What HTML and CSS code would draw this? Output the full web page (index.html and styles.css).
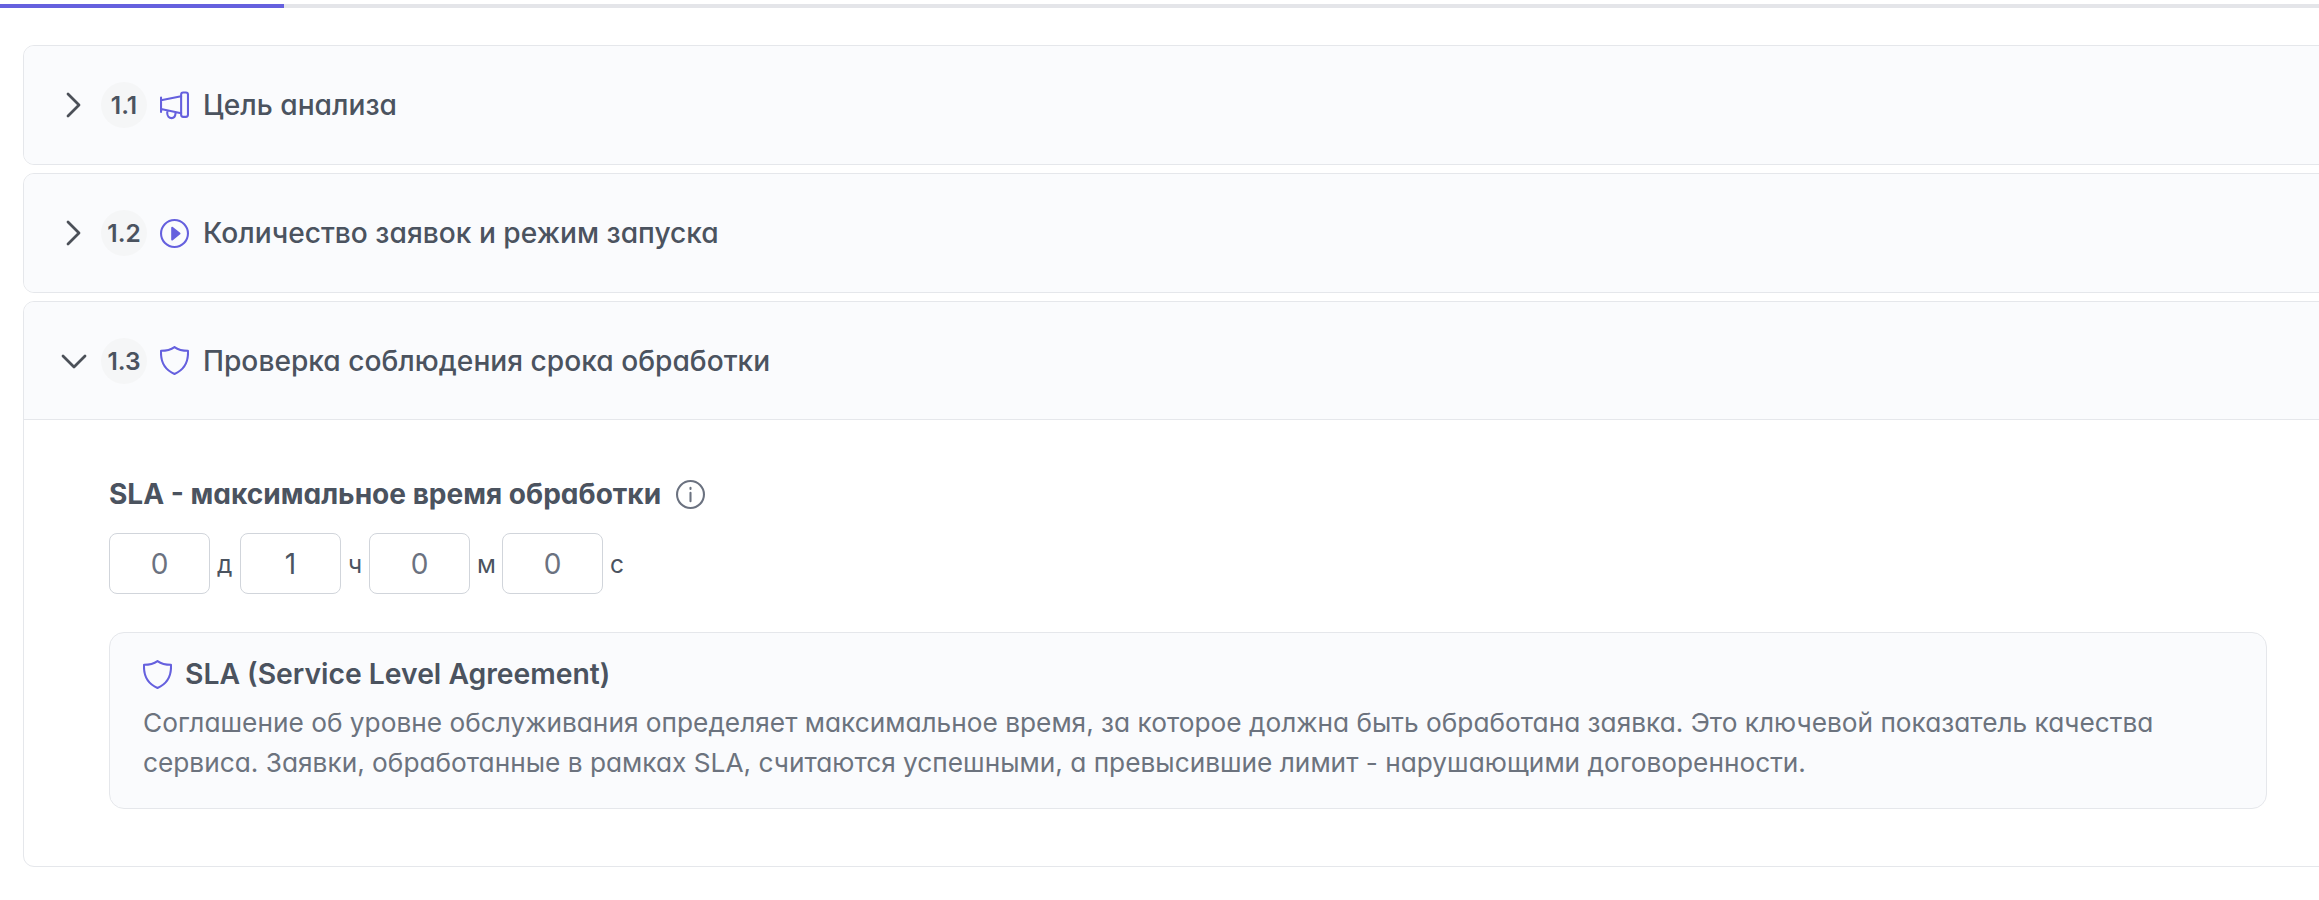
FILE: index.html
```html
<!DOCTYPE html>
<html lang="ru">
<head>
    <meta charset="UTF-8">
    <meta name="viewport" content="width=device-width, initial-scale=1.0">
    <title>Параметры анализа</title>
    <link rel="stylesheet" href="styles.css">
</head>
<body>
    <div class="progress">
        <div class="progress-bar"></div>
    </div>

    <div class="accordion">
        <section class="panel">
            <div class="panel-header">
                <svg class="chevron" viewBox="0 0 28 28"><path d="M8 3L19 14L8 25"/></svg>
                <span class="badge">1.1</span>
                <svg class="icon" viewBox="0 0 28 28">
                    <rect x="20.4" y="1.4" width="6.6" height="23.6" rx="2"/>
                    <path d="M1 6.2V20.2M1 9L20.4 5M1 17.4L20.4 21.4M7 19.8V21.6C7 24.2 8.8 26.2 11.2 26.2C13.2 26.2 14.8 24.6 15 21.4"/>
                </svg>
                <span class="panel-title">Цель анализа</span>
            </div>
        </section>

        <section class="panel">
            <div class="panel-header">
                <svg class="chevron" viewBox="0 0 28 28"><path d="M8 3L19 14L8 25"/></svg>
                <span class="badge">1.2</span>
                <svg class="icon" viewBox="0 0 28 28">
                    <circle cx="14" cy="14" r="13"/>
                    <path class="fill" d="M11.8 8.4L18.8 14L11.8 19.8Z"/>
                </svg>
                <span class="panel-title">Количество заявок и режим запуска</span>
            </div>
        </section>

        <section class="panel">
            <div class="panel-header open">
                <svg class="chevron" viewBox="0 0 28 28"><path d="M3 9L14 20L25 9"/></svg>
                <span class="badge">1.3</span>
                <svg class="icon" viewBox="0 0 28 28">
                    <path d="M14 1C10.6 3.4 6 4.6 1 4.6C.4 15.6 5.4 23.4 14 27C22.6 23.4 27.6 15.6 27 4.6C22 4.6 17.4 3.4 14 1Z"/>
                </svg>
                <span class="panel-title">Проверка соблюдения срока обработки</span>
            </div>
            <div class="panel-content">
                <div class="field-label">
                    <span>SLA - максимальное время обработки</span>
                    <svg class="icon info" viewBox="0 0 28 28">
                        <circle cx="14" cy="14" r="13"/>
                        <path d="M14 12.4V20.4M14 7.4V8.6"/>
                    </svg>
                </div>
                <div class="duration">
                    <input class="duration-input" type="text" placeholder="0">
                    <span class="unit unit-d">д</span>
                    <input class="duration-input" type="text" value="1">
                    <span class="unit unit-h">ч</span>
                    <input class="duration-input" type="text" placeholder="0">
                    <span class="unit unit-m">м</span>
                    <input class="duration-input" type="text" placeholder="0">
                    <span class="unit">с</span>
                </div>
                <div class="info-box">
                    <div class="info-title">
                        <svg class="icon" viewBox="0 0 28 28">
                            <path d="M14 1C10.6 3.4 6 4.6 1 4.6C.4 15.6 5.4 23.4 14 27C22.6 23.4 27.6 15.6 27 4.6C22 4.6 17.4 3.4 14 1Z"/>
                        </svg>
                        <span>SLA (Service Level Agreement)</span>
                    </div>
                    <p class="info-text">Соглашение об уровне обслуживания определяет максимальное время, за которое должна быть обработана заявка. Это ключевой показатель качества сервиса. Заявки, обработанные в рамках SLA, считаются успешными, а превысившие лимит - нарушающими договоренности.</p>
                </div>
            </div>
        </section>
    </div>
</body>
</html>
```
FILE: styles.css
```css
* {
    box-sizing: border-box;
}
body {
    margin: 0;
    padding-top: 4px;
    height: 900px;
    overflow: hidden;
    background: #fff;
    color: #4b535f;
    font-family: Inter, "Noto Sans", sans-serif;
    font-feature-settings: "cv02", "cv03", "cv04", "cv11";
    font-size: 28px;
}
.progress {
    height: 4px;
    background: #e4e5e9;
}
.progress-bar {
    width: 284px;
    height: 4px;
    background: #6560de;
}
.accordion {
    display: flex;
    flex-direction: column;
    gap: 8px;
    width: 2400px;
    margin: 37px 0 0 23px;
}
.panel {
    border: 1px solid #e5e7eb;
    border-radius: 11px;
    overflow: hidden;
}
.panel-header {
    display: flex;
    align-items: center;
    height: 118px;
    padding: 0 36px;
    background: #fafbfd;
    font-weight: 500;
}
.panel-header.open {
    border-bottom: 1px solid #e5e7eb;
}
.chevron {
    width: 28px;
    height: 28px;
    fill: none;
    stroke: #4b5058;
    stroke-width: 2.8;
    stroke-linecap: round;
    stroke-linejoin: round;
}
.badge {
    display: flex;
    align-items: center;
    justify-content: center;
    width: 46px;
    height: 46px;
    margin: 0 13px;
    border-radius: 50%;
    background: #f5f6f7;
    font-size: 24.5px;
    font-weight: 600;
}
.icon {
    flex: none;
    width: 29px;
    height: 29px;
    fill: none;
    stroke: #6560de;
    stroke-width: 2;
    stroke-linecap: round;
    stroke-linejoin: round;
}
.icon .fill {
    fill: #6560de;
}
.icon.info {
    stroke: #6b7280;
}
.panel-title {
    margin-left: 14px;
    font-size: 28.16px;
}
.panel-content {
    padding: 54px 0 57px 85px;
}
.field-label {
    display: flex;
    align-items: center;
    gap: 15px;
    height: 40px;
    font-size: 28.05px;
    font-weight: 700;
}
.duration {
    display: flex;
    align-items: center;
    margin-top: 19px;
}
.duration-input {
    width: 101px;
    height: 61px;
    padding: 0;
    border: 1px solid #d1d5db;
    border-radius: 8px;
    background: #fff;
    color: #4b5563;
    font: inherit;
    text-align: center;
}
.duration-input::placeholder {
    color: #6b7280;
    opacity: 1;
}
.unit {
    width: 20px;
    margin-left: 7px;
    font-size: 24.5px;
}
.unit-d {
    width: 23px;
}
.unit-h {
    width: 21px;
}
.unit-m {
    width: 25px;
}
.info-box {
    width: 2158px;
    height: 177px;
    margin-top: 38px;
    padding: 21px 33px;
    border: 1px solid #e5e7eb;
    border-radius: 15px;
    background: #fafbfd;
}
.info-title {
    display: flex;
    align-items: center;
    gap: 13px;
    height: 40px;
    font-size: 28.3px;
    font-weight: 600;
}
.info-text {
    margin: 9px 0 0;
    color: #6c737e;
    font-size: 26.25px;
    line-height: 40px;
}
```
